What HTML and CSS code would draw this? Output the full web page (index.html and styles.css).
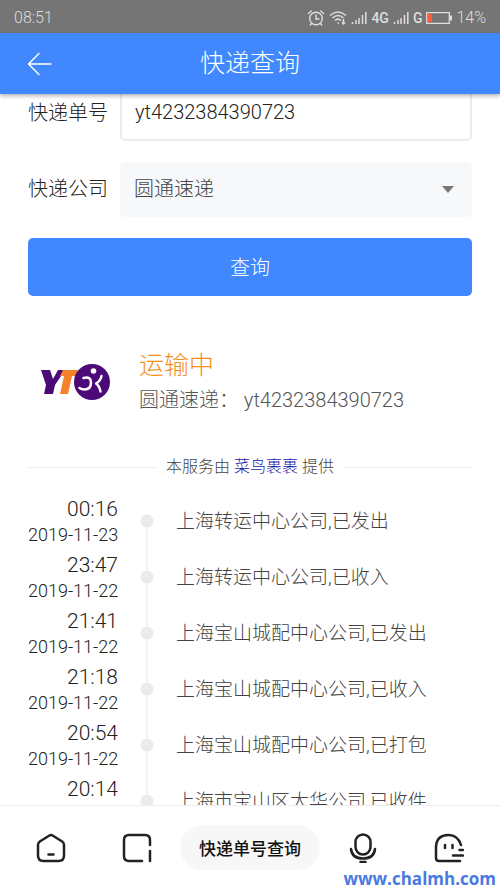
FILE: index.html
```html
<!DOCTYPE html>
<html lang="zh-CN">
<head>
<meta charset="utf-8">
<meta name="viewport" content="width=device-width, initial-scale=1">
<title>快递查询</title>
<link rel="stylesheet" href="styles.css">
</head>
<body>
<div class="status-bar">
  <span>08:51</span>
  <div class="status-icons">
    <svg width="18" height="18" viewBox="0 0 18 18" fill="none" stroke="currentColor" stroke-width="1.4" stroke-linecap="round"><circle cx="9" cy="9.5" r="6.3"/><path d="M9 6v4h3M1.5 4.5 4.3 2M16.500 4.500 13.700 2M4.500 14.500 3.300 16M13.500 14.500l1.200 1.500"/></svg>
    <svg width="18" height="16" viewBox="0 0 18 16" fill="none" stroke="currentColor" stroke-width="1.500"><path d="M1 5.500Q9-1.500 17 5.500M3.500 8Q9 3 14.500 8M6 10.500Q9 7.700 12 10.500M8.500 13h1.500M14.500 9v5M13 12.500l1.500 1.500 1.500-1.500"/></svg>
    <svg width="16" height="14" viewBox="0 0 16 14" fill="none" stroke="currentColor" stroke-width="1.500"><path d="M1.500 11v2M5 9v4M8 7v6M11.500 4v9M14.800 1v12"/></svg>
    <b>4G</b>
    <svg width="16" height="14" viewBox="0 0 16 14" fill="none" stroke="currentColor" stroke-width="1.500"><path d="M1.500 11v2M5 9v4M8 7v6M11.500 4v9M14.800 1v12"/></svg>
    <b>G</b>
    <svg width="26" height="12" viewBox="0 0 26 12"><path d="M.7.7h22.600v10.600H.7z" fill="none" stroke="currentColor" stroke-width="1.300"/><path d="M24 3.500h2v5h-2z" fill="currentColor"/><path d="M1.800 1.800H6v8.400H1.800z" fill="#ff5a3c"/></svg>
    <span>14%</span>
  </div>
</div>

<header class="title-bar">
  <button class="back" type="button" aria-label="返回">
    <svg width="26" height="24" viewBox="0 0 26 24" fill="none" stroke="currentColor" stroke-width="1.500" stroke-linecap="round" stroke-linejoin="round"><path d="M24 12H1.500M12 1.500 1.500 12 12 22.500"/></svg>
  </button>
  <h1>快递查询</h1>
</header>

<main class="content">
  <form class="query">
    <div class="field">
      <label for="number">快递单号</label>
      <input id="number" class="control" type="text" value="yt4232384390723">
    </div>
    <div class="field">
      <label for="company">快递公司</label>
      <div class="select-wrap">
        <select id="company" class="control"><option>圆通速递</option></select>
      </div>
    </div>
    <button class="submit" type="button">查询</button>
  </form>

  <section class="summary">
    <svg class="logo" width="72" height="38" viewBox="0 0 72 38" role="img" aria-label="圆通速递">
      <path d="M1 7h9l3 9 5-9h7L15 22l-2 9H4l2-9z" fill="#4b0a78"/>
      <path d="M23 7h15l-1 6h-5l-4 18h-8l4-18h-4z" fill="#f5812a"/>
      <circle cx="52" cy="19" r="18" fill="#4b0a78"/>
      <circle cx="53.500" cy="8" r="2.800" fill="#fff"/>
      <g fill="none" stroke="#fff" stroke-linecap="round" stroke-linejoin="round"><path d="M43.500 15Q51 13 51 19.500q0 7-6.500 7-3 0-5-1.500" stroke-width="2.600"/><path d="M61.500 13q-1 5-5.500 7.500 3.500 2.500 4.500 8" stroke-width="2.400"/></g>
    </svg>
    <div>
      <h2>运输中</h2>
      <p>圆通速递： yt4232384390723</p>
    </div>
  </section>

  <p class="provider"><span>本服务由 <a href="#">菜鸟裹裹</a> 提供</span></p>

  <ol class="timeline">
    <li><div class="when"><time>00:16</time><span>2019-11-23</span></div><i class="dot"></i><p>上海转运中心公司,已发出</p></li>
    <li><div class="when"><time>23:47</time><span>2019-11-22</span></div><i class="dot"></i><p>上海转运中心公司,已收入</p></li>
    <li><div class="when"><time>21:41</time><span>2019-11-22</span></div><i class="dot"></i><p>上海宝山城配中心公司,已发出</p></li>
    <li><div class="when"><time>21:18</time><span>2019-11-22</span></div><i class="dot"></i><p>上海宝山城配中心公司,已收入</p></li>
    <li><div class="when"><time>20:54</time><span>2019-11-22</span></div><i class="dot"></i><p>上海宝山城配中心公司,已打包</p></li>
    <li><div class="when"><time>20:14</time></div><i class="dot"></i><p>上海市宝山区大华公司,已收件</p></li>
  </ol>
</main>

<nav class="tab-bar">
  <div class="tabs">
    <button type="button" aria-label="主页">
      <svg width="30" height="30" viewBox="0 0 30 30"><path d="M13 2.700 3.800 8.500Q2 9.700 2 12v10.500Q2 28 7.500 28h15q5.500 0 5.500-5.500V12q0-2.300-1.800-3.500L17 2.700Q15 1.500 13 2.700zM12.500 21.500h5"/></svg>
    </button>
    <button type="button" aria-label="窗口">
      <svg width="30" height="30" viewBox="0 0 30 30"><path d="M20 28H7q-5 0-5-5V7q0-5 5-5h16q5 0 5 5v5M28 18v10"/></svg>
    </button>
  </div>
  <button class="pill" type="button">快递单号查询</button>
  <div class="tabs">
    <button type="button" aria-label="语音">
      <svg width="30" height="30" viewBox="0 0 30 30"><rect x="7.500" y="1.500" width="15" height="20" rx="7.500"/><path d="M3 16q1 9.500 12 9.500T27 16M12.500 29h5"/></svg>
    </button>
    <button type="button" aria-label="我的">
      <svg width="30" height="30" viewBox="0 0 30 30"><path d="M27 12Q24 2 14.500 2 2 2 2 15v10q0 3 3 3h21M11 12v3M18.500 12v3M25.500 17h3.500M19 22.500h10"/></svg>
    </button>
  </div>
</nav>
<div class="watermark">www.chalmh.com</div>
</body>
</html>
```

FILE: styles.css
```css
* {
  box-sizing: border-box;
}

body {
  margin: 0;
  height: 100vh;
  display: flex;
  flex-direction: column;
  position: relative;
  overflow: hidden;
  background: #fff;
  color: #222;
  font-family: Roboto, "Noto Sans CJK SC", sans-serif;
  font-weight: 300;
  font-size: 20px;
}

h1, h2, p, ol {
  margin: 0;
  padding: 0;
  font-weight: 300;
}

button, input, select {
  font: inherit;
  border: 0;
  padding: 0;
  margin: 0;
  background: none;
}

svg {
  display: block;
}

.status-bar {
  flex: none;
  height: 33px;
  padding: 2px 14px 0;
  display: flex;
  align-items: center;
  justify-content: space-between;
  background: #757575;
  color: #dedede;
  font-size: 16px;
}

.status-icons {
  display: flex;
  align-items: center;
  gap: 4px;
}

.status-icons b {
  font-size: 14px;
  font-weight: 500;
}

.title-bar {
  flex: none;
  height: 61px;
  padding: 0 27px;
  display: grid;
  grid-template-columns: 1fr auto 1fr;
  align-items: center;
  background: #4188ff;
  color: #fff;
  box-shadow: 0 2px 4px rgba(0, 0, 0, 0.3);
  z-index: 1;
}

.title-bar h1 {
  font-size: 25px;
  line-height: 36px;
}

.back {
  justify-self: start;
  color: #fff;
}

.content {
  flex: 1;
  min-height: 0;
  padding: 0 28px;
  overflow: hidden;
}

.query {
  margin-top: -8px;
  display: flex;
  flex-direction: column;
  gap: 21px;
}

.field {
  display: flex;
  align-items: center;
}

.field label {
  flex: none;
  width: 92px;
  padding-bottom: 4px;
}

.control {
  width: 100%;
  height: 55px;
  padding: 0 14px 2px;
  border-radius: 5px;
  color: #222;
}

input.control {
  flex: 1;
  min-width: 0;
  padding: 0 13px 4px;
  border: 2px solid #ececee;
}

.select-wrap {
  flex: 1;
  position: relative;
}

select.control {
  display: block;
  appearance: none;
  background: #f7f8fa;
  color: #444;
}

.select-wrap::after {
  content: "";
  position: absolute;
  right: 18px;
  top: 24px;
  border: 6px solid transparent;
  border-top: 7px solid #777;
  border-bottom: 0;
  pointer-events: none;
}

.submit {
  height: 58px;
  padding-bottom: 2px;
  border-radius: 5px;
  background: #4188ff;
  color: #fff;
}

.summary {
  margin-top: 52px;
  padding-left: 12px;
  display: flex;
  align-items: center;
  gap: 27px;
}

.summary h2 {
  font-size: 25px;
  line-height: 36px;
  color: #f39018;
}

.summary p {
  line-height: 32px;
  color: #555;
}

.provider {
  margin-top: 39px;
  display: flex;
  align-items: center;
  gap: 10px;
  font-size: 16px;
  line-height: 24px;
  color: #444;
}

.provider::before,
.provider::after {
  content: "";
  flex: 1;
  height: 1px;
  background: #eee;
}

.provider a {
  color: #2418a8;
  text-decoration: none;
}

.timeline {
  margin-top: 17px;
  list-style: none;
}

.timeline li {
  height: 56px;
  display: grid;
  grid-template-columns: 90px 58px 1fr;
}

.when {
  text-align: right;
  white-space: nowrap;
}

.when time,
.when span {
  display: block;
  line-height: 26px;
}

.when time {
  font-size: 21px;
}

.when span {
  font-size: 18px;
}

.dot {
  justify-self: center;
  width: 14px;
  background:
    radial-gradient(circle at 7px 25px, #ebebeb 6px, transparent 7px),
    linear-gradient(#f4f4f4, #f4f4f4) center / 2px 100% no-repeat;
}

.timeline li:first-child .dot {
  background:
    radial-gradient(circle at 7px 25px, #ebebeb 6px, transparent 7px),
    linear-gradient(#f4f4f4, #f4f4f4) center 25px / 2px 100% no-repeat;
}

.timeline p {
  font-size: 19px;
  line-height: 52px;
  color: #444;
  white-space: nowrap;
}

.tab-bar {
  flex: none;
  height: 84px;
  padding: 0 36px;
  display: flex;
  align-items: center;
  justify-content: space-between;
  border-top: 1px solid #eee;
  background: #fff;
}

.tabs {
  display: flex;
  gap: 56px;
}

.tab-bar svg {
  fill: none;
  stroke: #222;
  stroke-width: 2.5;
  stroke-linecap: round;
  stroke-linejoin: round;
}

.pill {
  height: 45px;
  padding: 0 19px;
  border-radius: 23px;
  background: #f7f7f7;
  color: #111;
  font-size: 17px;
  font-weight: 500;
}

.watermark {
  position: absolute;
  right: 4px;
  bottom: 0;
  font: 700 17px/20px "Open Sans", sans-serif;
  color: #4a7ae0;
}
```
